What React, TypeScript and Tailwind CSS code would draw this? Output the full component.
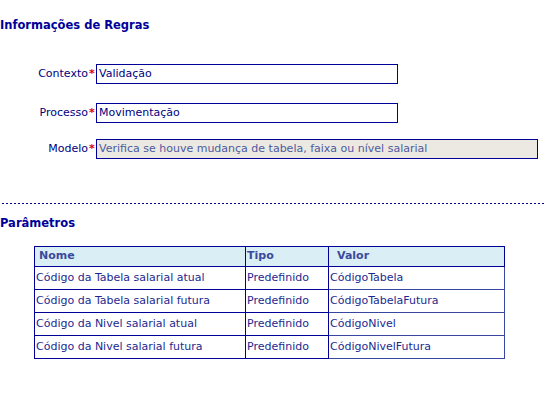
const params = [
  { nome: "Código da Tabela salarial atual", tipo: "Predefinido", valor: "CódigoTabela" },
  { nome: "Código da Tabela salarial futura", tipo: "Predefinido", valor: "CódigoTabelaFutura" },
  { nome: "Código da Nivel salarial atual", tipo: "Predefinido", valor: "CódigoNivel" },
  { nome: "Código da Nivel salarial futura", tipo: "Predefinido", valor: "CódigoNivelFutura" },
];

function Field({ label, value, wide }: { label: string; value: string; wide?: boolean }) {
  return (
    <div className="flex items-center">
      <span className="w-[88px] text-right text-[#000080]">{label}</span>
      <span className="w-[8px] text-center font-bold text-[#e00000]">*</span>
      <div
        className={
          "h-[20px] border border-[#000099] px-[2px] leading-[18px] " +
          (wide ? "w-[442px] bg-[#ebe9e2] text-[#4b5aa0]" : "w-[302px] bg-white text-[#000080]")
        }
      >
        {value}
      </div>
    </div>
  );
}

export default function App() {
  return (
    <div className="h-[400px] w-[546px] bg-white font-['DejaVu_Sans',sans-serif] text-[11px]">
      <h1 className="pt-[17px] text-[11.5px] font-bold leading-[16px] text-[#000099]">Informações de Regras</h1>

      <div className="mt-[31px] flex flex-col">
        <Field label="Contexto" value="Validação" />
        <div className="mt-[19px]">
          <Field label="Processo" value="Movimentação" />
        </div>
        <div className="mt-[16px]">
          <Field label="Modelo" value="Verifica se houve mudança de tabela, faixa ou nível salarial" wide />
        </div>
      </div>

      <div className="ml-[2px] mt-[44px] h-px bg-[repeating-linear-gradient(90deg,#000099_0_2px,transparent_2px_4px)]" />

      <h2 className="mt-[11px] text-[11.5px] font-bold leading-[16px] text-[#000099]">Parâmetros</h2>

      <table className="ml-[34px] mt-[15px] w-[471px] table-fixed border-collapse text-[#1c2a90]">
        <thead>
          <tr className="h-[20px] bg-[#daeef6] text-left font-bold text-[#3a4a9c]">
            <th className="w-[211px] border border-[#000099] px-[4px] py-0">Nome</th>
            <th className="w-[83px] border border-[#000099] px-[1px] py-0">Tipo</th>
            <th className="border border-[#000099] px-[8px] py-0">Valor</th>
          </tr>
        </thead>
        <tbody>
          {params.map((p) => (
            <tr key={p.valor} className="h-[23px]">
              <td className="border border-[#000099] px-[1px] py-0">{p.nome}</td>
              <td className="border border-[#000099] px-[1px] py-0">{p.tipo}</td>
              <td className="border border-[#3848a0] px-[1px] py-0">{p.valor}</td>
            </tr>
          ))}
        </tbody>
      </table>
    </div>
  );
}
